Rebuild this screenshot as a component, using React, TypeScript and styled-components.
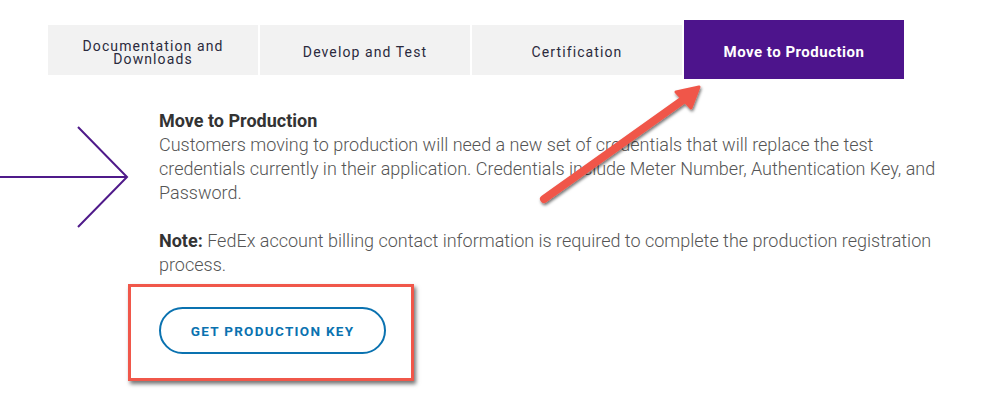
import styled, { createGlobalStyle } from "styled-components";

const tabs = [
  { label: "Documentation and Downloads", active: false },
  { label: "Develop and Test", active: false },
  { label: "Certification", active: false },
  { label: "Move to Production", active: true },
];

const App = () => {
  return (
    <Page>
      <GlobalStyle />
      <TabBar>
        {tabs.map((t) => (
          <Tab key={t.label} $active={t.active}>
            <TabLabel>{t.label}</TabLabel>
          </Tab>
        ))}
      </TabBar>

      <Content>
        <Heading>Move to Production</Heading>
        <Paragraph>
          Customers moving to production will need a new set of credentials that will replace
          the test credentials currently in their application. Credentials include Meter
          Number, Authentication Key, and Password.
        </Paragraph>
        <Paragraph>
          <NoteLabel>Note:</NoteLabel> FedEx account billing contact information is required to
          complete the production registration process.
        </Paragraph>
        <KeyButton>GET PRODUCTION KEY</KeyButton>
      </Content>

      {/* annotations drawn over the screenshot */}
      <PurpleArrow width="130" height="104" viewBox="0 0 130 104">
        <path
          d="M0 52 H127 M78 2 L127 52 L78 102"
          fill="none"
          stroke="#4f1a8a"
          strokeWidth="2"
        />
      </PurpleArrow>

      <RedArrow width="200" height="150" viewBox="0 0 200 150">
        <defs>
          <filter id="sh" x="-20%" y="-20%" width="140%" height="140%">
            <feDropShadow dx="1" dy="2" stdDeviation="1.6" floodColor="#000" floodOpacity="0.55" />
          </filter>
        </defs>
        <g filter="url(#sh)">
          <path d="M14 129 L153 30" stroke="#f0574a" strokeWidth="8" strokeLinecap="round" />
          <path
            d="M169 17 L146 22 L161 38 Z"
            fill="#f0574a"
            stroke="#f0574a"
            strokeWidth="3"
            strokeLinejoin="round"
          />
        </g>
      </RedArrow>

      <HighlightBox />
    </Page>
  );
};

const GlobalStyle = createGlobalStyle`
  html, body {
    margin: 0;
    padding: 0;
    background: #ffffff;
  }
  body {
    font-family: Roboto, "Liberation Sans", Arial, sans-serif;
  }
`;

const Page = styled.div`
  position: relative;
  width: 988px;
  height: 416px;
  overflow: hidden;
  background: #fff;
`;

const TabBar = styled.div`
  display: flex;
  align-items: center;
  gap: 2px;
  padding: 20px 0 0 48px;
  height: 59px;
`;

const Tab = styled.div<{ $active: boolean }>`
  display: flex;
  align-items: center;
  justify-content: center;
  padding-top: 6px;
  box-sizing: border-box;
  width: ${(p) => (p.$active ? "220px" : "210px")};
  height: ${(p) => (p.$active ? "59px" : "50px")};
  background: ${(p) => (p.$active ? "#4d148c" : "#f2f2f2")};
  color: ${(p) => (p.$active ? "#ffffff" : "#2b2a3d")};
  font-weight: ${(p) => (p.$active ? 700 : 400)};
  font-size: ${(p) => (p.$active ? "15px" : "14px")};
  letter-spacing: ${(p) => (p.$active ? "0.5px" : "1.1px")};
`;

const TabLabel = styled.span`
  text-align: center;
  line-height: 13px;
  max-width: 170px;
`;

const Content = styled.div`
  display: flex;
  flex-direction: column;
  align-items: flex-start;
  width: 790px;
  margin: 30px 0 0 159px;
  color: #555555;
  font-size: 18px;
  line-height: 24px;
  font-weight: 300;
`;

const Heading = styled.div`
  font-weight: 700;
  color: #333333;
`;

const Paragraph = styled.p`
  margin: 0 0 24px;
`;

const NoteLabel = styled.b`
  font-weight: 700;
  color: #333333;
`;

const KeyButton = styled.button`
  margin-top: 6px;
  width: 227px;
  height: 47px;
  border: 2px solid #0a72b0;
  border-radius: 24px;
  background: #fff;
  color: #0a72b0;
  font-family: Roboto, "Liberation Sans", Arial, sans-serif;
  font-size: 13.5px;
  font-weight: 700;
  letter-spacing: 1.3px;
  cursor: pointer;
`;

const PurpleArrow = styled.svg`
  position: absolute;
  left: 0;
  top: 125px;
`;

const RedArrow = styled.svg`
  position: absolute;
  left: 530px;
  top: 70px;
`;

const HighlightBox = styled.div`
  position: absolute;
  left: 128px;
  top: 284px;
  width: 280px;
  height: 91px;
  border: 3px solid #f0574a;
  box-shadow: 2px 3px 4px rgba(0, 0, 0, 0.55);
`;

export default App;
